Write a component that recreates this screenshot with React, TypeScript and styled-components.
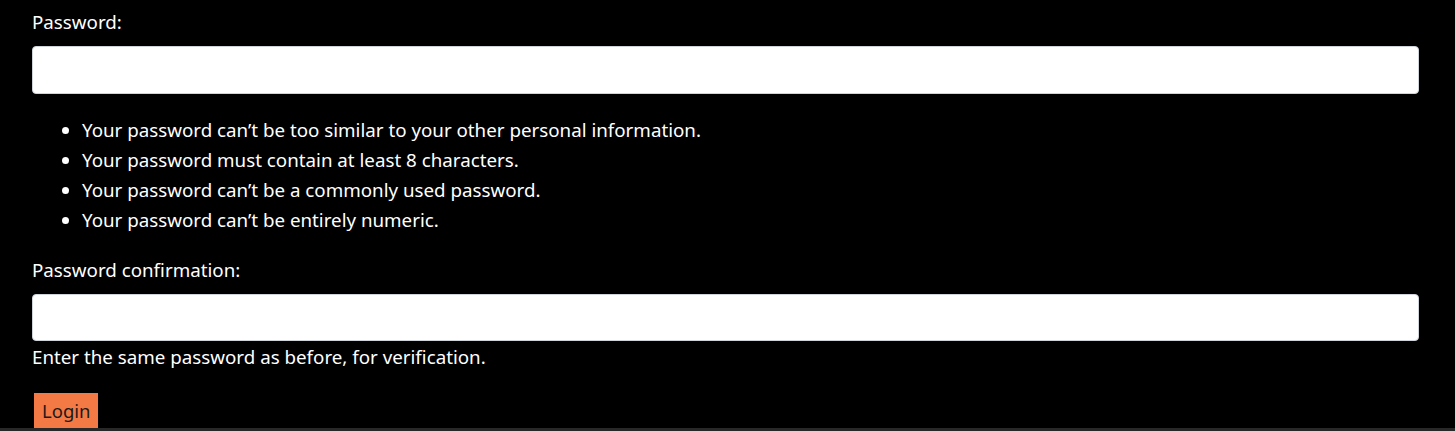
import React from 'react';
import styled, { createGlobalStyle } from 'styled-components';

const GlobalStyle = createGlobalStyle`
  body {
    margin: 0;
    background: #000;
    color: #fff;
    font-family: 'Noto Sans', 'Open Sans', sans-serif;
    font-size: 18.75px;
  }
`;

const Form = styled.form`
  display: flex;
  flex-direction: column;
  padding: 10px 36px 0 32px;
`;

const Label = styled.label`
  display: block;
  line-height: 24px;
  margin-bottom: 12px;
`;

const Input = styled.input<{ h: number }>`
  box-sizing: border-box;
  width: 100%;
  height: ${p => p.h}px;
  border: 1px solid #ced4da;
  border-radius: 4px;
  background: #fff;
  padding: 6px 12px;
  font-size: 16px;
  outline: none;
`;

const HintList = styled.ul`
  margin: 21px 0 23px;
  padding-left: 50px;
`;

const Hint = styled.li`
  line-height: 30px;
`;

const HelpText = styled.span`
  display: block;
  line-height: 24px;
  margin-top: 4px;
`;

const SubmitButton = styled.button`
  align-self: flex-start;
  margin: 24px 0 0 2px;
  height: 35px;
  padding: 0 8px;
  border: none;
  border-radius: 0;
  background: #f47a45;
  color: #1a1a1a;
  font-family: 'Noto Sans', 'Open Sans', sans-serif;
  font-size: 18.5px;
`;

const Footer = styled.footer`
  height: 40px;
  background: #282828;
`;

const hints = [
  'Your password can\u2019t be too similar to your other personal information.',
  'Your password must contain at least 8 characters.',
  'Your password can\u2019t be a commonly used password.',
  'Your password can\u2019t be entirely numeric.',
];

const App: React.FC = () => {
  return (
    <>
      <GlobalStyle />
      <Form onSubmit={e => e.preventDefault()}>
        <Label htmlFor="password1">Password:</Label>
        <Input id="password1" type="password" h={48} />
        <HintList>
          {hints.map(h => (
            <Hint key={h}>{h}</Hint>
          ))}
        </HintList>
        <Label htmlFor="password2">Password confirmation:</Label>
        <Input id="password2" type="password" h={47} />
        <HelpText>Enter the same password as before, for verification.</HelpText>
        <SubmitButton type="submit">Login</SubmitButton>
      </Form>
      <Footer />
    </>
  );
};

export default App;
